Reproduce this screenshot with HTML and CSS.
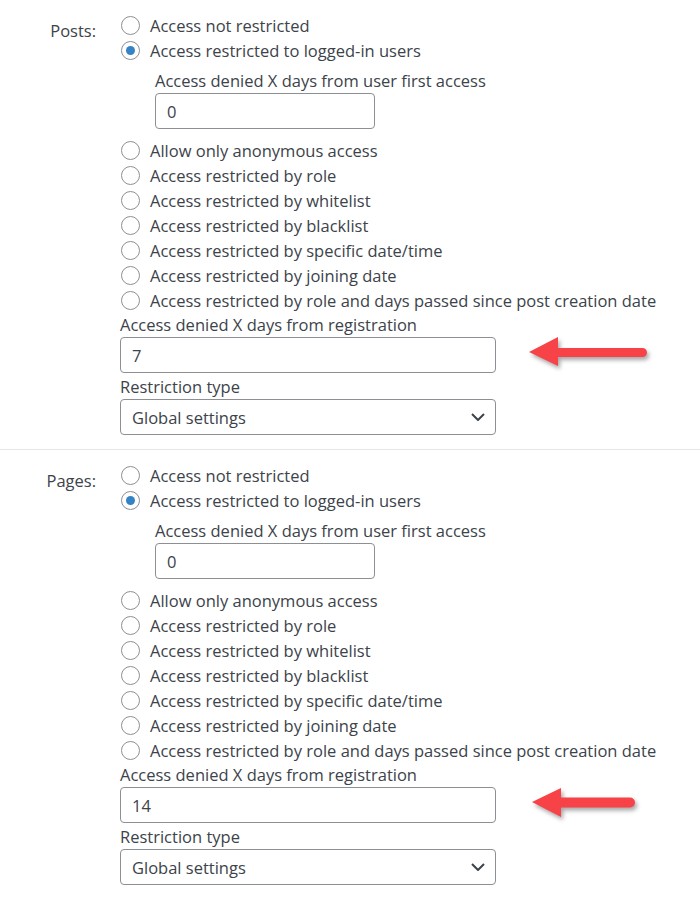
FILE: index.html
```html
<!DOCTYPE html>
<html lang="en">
<head>
<meta charset="UTF-8">
<meta name="viewport" content="width=device-width, initial-scale=1.0">
<title>Access settings</title>
<link rel="stylesheet" href="styles.css">
</head>
<body>

<div class="section">
  <div class="row-label">Posts:</div>
  <div class="row-body">
    <label class="radio"><span class="dot"></span>Access not restricted</label>
    <label class="radio"><span class="dot checked"></span>Access restricted to logged-in users</label>
    <div class="nested">
      <div class="field-label">Access denied X days from user first access</div>
      <div class="input small">0</div>
    </div>
    <label class="radio"><span class="dot"></span>Allow only anonymous access</label>
    <label class="radio"><span class="dot"></span>Access restricted by role</label>
    <label class="radio"><span class="dot"></span>Access restricted by whitelist</label>
    <label class="radio"><span class="dot"></span>Access restricted by blacklist</label>
    <label class="radio"><span class="dot"></span>Access restricted by specific date/time</label>
    <label class="radio"><span class="dot"></span>Access restricted by joining date</label>
    <label class="radio"><span class="dot"></span>Access restricted by role and days passed since post creation date</label>
    <div class="field-label">Access denied X days from registration</div>
    <div class="input">7</div>
    <div class="field-label">Restriction type</div>
    <div class="input select">Global settings
      <svg class="chevron" width="14" height="8" viewBox="0 0 14 8"><path d="M1 1l6 6 6-6" fill="none" stroke="#3c434a" stroke-width="2"/></svg>
    </div>
  </div>
  <svg class="arrow" width="132" height="44" viewBox="0 0 132 44"><path d="M5 20L34 5V16H118.5A4.5 4.5 0 0 1 118.5 25H34V34Z" fill="#f74347"/></svg>
</div>

<div class="section">
  <div class="row-label">Pages:</div>
  <div class="row-body">
    <label class="radio"><span class="dot"></span>Access not restricted</label>
    <label class="radio"><span class="dot checked"></span>Access restricted to logged-in users</label>
    <div class="nested">
      <div class="field-label">Access denied X days from user first access</div>
      <div class="input small">0</div>
    </div>
    <label class="radio"><span class="dot"></span>Allow only anonymous access</label>
    <label class="radio"><span class="dot"></span>Access restricted by role</label>
    <label class="radio"><span class="dot"></span>Access restricted by whitelist</label>
    <label class="radio"><span class="dot"></span>Access restricted by blacklist</label>
    <label class="radio"><span class="dot"></span>Access restricted by specific date/time</label>
    <label class="radio"><span class="dot"></span>Access restricted by joining date</label>
    <label class="radio"><span class="dot"></span>Access restricted by role and days passed since post creation date</label>
    <div class="field-label">Access denied X days from registration</div>
    <div class="input">14</div>
    <div class="field-label">Restriction type</div>
    <div class="input select">Global settings
      <svg class="chevron" width="14" height="8" viewBox="0 0 14 8"><path d="M1 1l6 6 6-6" fill="none" stroke="#3c434a" stroke-width="2"/></svg>
    </div>
  </div>
  <svg class="arrow arrow-short" width="132" height="44" viewBox="0 0 132 44"><path d="M5 20L34 6V15.5H103A5 5 0 0 1 103 25.5H34V35Z" fill="#f74347"/></svg>
</div>

</body>
</html>
```

FILE: styles.css
```css
body {
  font-family: 'Open Sans', 'Noto Sans', sans-serif;
  font-size: 16.5px;
  background-color: #fff;
  color: #3c434a;
  margin: 0;
}
.section {
  position: relative;
  display: flex;
  padding: 13px 0 12px;
  border-bottom: 1px solid #e6e6e6;
}
.section:last-child {
  border-bottom: none;
}
.row-label {
  width: 96px;
  text-align: right;
  padding-top: 5px;
  line-height: 25px;
}
.row-body {
  padding-left: 24px;
}
.radio {
  display: flex;
  align-items: center;
  height: 25px;
  line-height: 25px;
  white-space: nowrap;
}
.dot {
  box-sizing: border-box;
  width: 19px;
  height: 19px;
  border: 1px solid #8c8f94;
  border-radius: 50%;
  margin: 0 10px 0 1px;
  display: flex;
  align-items: center;
  justify-content: center;
}
.dot.checked::after {
  content: "";
  width: 9px;
  height: 9px;
  border-radius: 50%;
  background-color: #3582c4;
}
.nested {
  padding: 6px 0 9px 35px;
}
.field-label {
  line-height: 24px;
}
.input {
  box-sizing: border-box;
  width: 376px;
  height: 36px;
  border: 1px solid #8c8f94;
  border-radius: 4px;
  padding: 0 11px;
  display: flex;
  align-items: center;
  margin-bottom: 2px;
}
.input.small {
  width: 220px;
  margin-bottom: 0;
}
.select {
  justify-content: space-between;
  padding-right: 10px;
}
.arrow {
  position: absolute;
  left: 524px;
  top: 332px;
  filter: drop-shadow(2px 3px 2px rgba(0, 0, 0, 0.35));
}
.arrow-short {
  left: 527px;
}
```
